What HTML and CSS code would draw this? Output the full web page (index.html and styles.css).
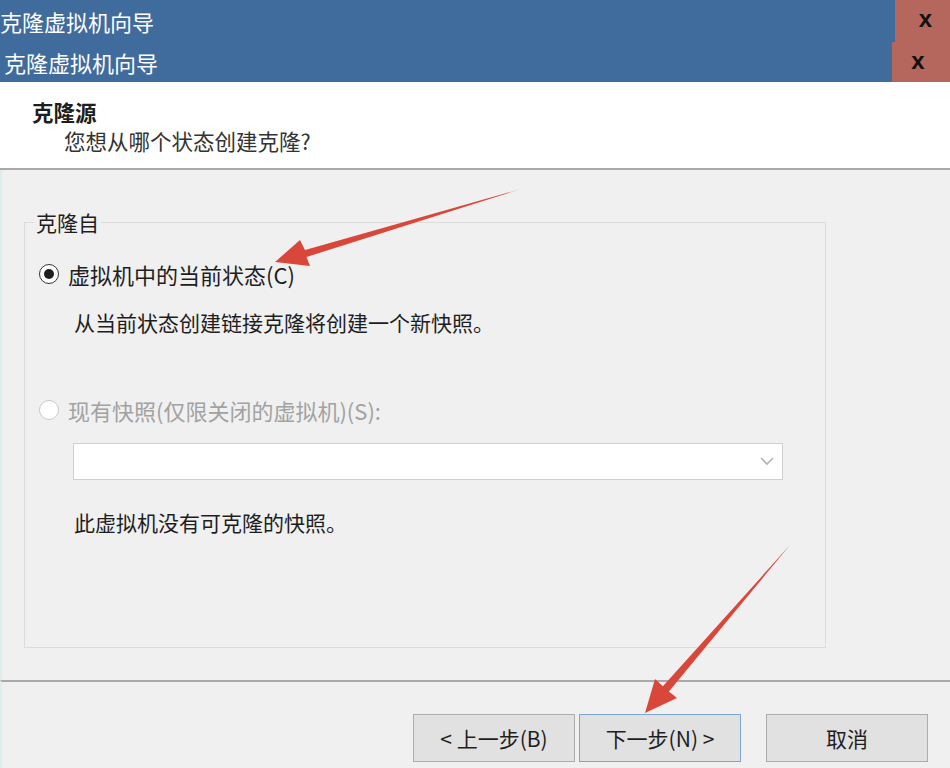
FILE: index.html
```html
<!DOCTYPE html>
<html lang="zh-CN">
<head>
    <meta charset="UTF-8">
    <title>克隆虚拟机向导</title>
    <link rel="stylesheet" href="styles.css">
</head>
<body>
    <div class="window">
        <div class="titlebar">
            <span class="title">克隆虚拟机向导</span>
            <span class="close">x</span>
        </div>
        <div class="titlebar second">
            <span class="title">克隆虚拟机向导</span>
            <span class="close">x</span>
        </div>

        <div class="header">
            <div class="header-title">克隆源</div>
            <div class="header-sub">您想从哪个状态创建克隆?</div>
        </div>

        <div class="content">
            <fieldset class="group">
                <legend>克隆自</legend>
                <div class="option">
                    <span class="radio checked"></span>
                    <span>虚拟机中的当前状态(C)</span>
                </div>
                <p class="desc">从当前状态创建链接克隆将创建一个新快照。</p>
                <div class="option disabled second-option">
                    <span class="radio"></span>
                    <span>现有快照(仅限关闭的虚拟机)(S):</span>
                </div>
                <div class="select">
                    <svg width="14" height="9" viewBox="0 0 14 9"><path d="M1 1 L7 7 L13 1" fill="none" stroke="#b4b4b4" stroke-width="1.6"/></svg>
                </div>
                <p class="desc note">此虚拟机没有可克隆的快照。</p>
            </fieldset>
        </div>

        <div class="footer">
            <button class="btn">&lt; 上一步(B)</button>
            <button class="btn focused">下一步(N) &gt;</button>
            <button class="btn cancel">取消</button>
        </div>

        <svg class="arrows" width="950" height="768" viewBox="0 0 950 768">
            <polygon points="521,189 305,250 300,240 275,262 310,266 306.5,257" fill="#d9473b"/>
            <polygon points="790,545 662.9,686.2 655,679 645,713 677,698 668.9,691.4" fill="#d9473b"/>
        </svg>
    </div>
</body>
</html>
```

FILE: styles.css
```css
body {
    margin: 0;
    font-family: "Noto Sans CJK SC", "Noto Sans", sans-serif;
    color: #1e1e1e;
    background: #f0f0f0;
}
.window {
    position: relative;
    width: 950px;
    height: 768px;
    overflow: hidden;
    background: #f0f0f0;
}
.titlebar {
    display: flex;
    justify-content: space-between;
    height: 42px;
    background: #3f6b9d;
    color: white;
}
.titlebar.second {
    height: 40px;
}
.title {
    font-size: 22px;
    line-height: 42px;
}
.second .title {
    line-height: 40px;
    padding-left: 4px;
}
.close {
    width: 55px;
    box-sizing: border-box;
    background: #b5675d;
    color: #111;
    font-family: "Liberation Sans", sans-serif;
    font-weight: bold;
    font-size: 24px;
    line-height: 38px;
    text-align: center;
    padding-left: 6px;
}
.second .close {
    width: 58px;
    padding: 0 6px 0 0;
}
.header {
    background: white;
    border-bottom: 2px solid #a9a9a9;
    box-sizing: border-box;
    height: 88px;
    padding-top: 16px;
}
.header-title {
    font-size: 21.5px;
    font-weight: bold;
    line-height: 28px;
    padding-left: 32px;
}
.header-sub {
    font-size: 21.5px;
    line-height: 30px;
    padding-left: 64px;
    color: #333;
}
.content {
    height: 510px;
    box-sizing: border-box;
    padding: 39px 124px 0 22px;
    border-left: 2px solid #dcefee;
}
.group {
    margin: 0;
    padding: 0 0 0 14px;
    height: 439px;
    box-sizing: border-box;
    border: 1px solid #dcdcdc;
}
.group legend {
    margin-left: -5px;
    padding: 0 2px;
    font-size: 21px;
    line-height: 26px;
}
.option {
    display: flex;
    align-items: center;
    gap: 9px;
    font-size: 22px;
    line-height: 30px;
    margin-top: 24px;
}
.second-option {
    margin-top: 58px;
}
.disabled {
    color: #a2a2a2;
}
.radio {
    width: 18px;
    height: 18px;
    border: 1px solid #333;
    border-radius: 50%;
    background: white;
    display: flex;
    align-items: center;
    justify-content: center;
}
.radio.checked::after {
    content: "";
    width: 10px;
    height: 10px;
    border-radius: 50%;
    background: #1e1e1e;
}
.disabled .radio {
    border-color: #c8c8c8;
}
.desc {
    margin: 18px 0 0 35px;
    font-size: 21px;
    line-height: 30px;
}
.select {
    margin: 18px 0 0 34px;
    width: 710px;
    height: 37px;
    box-sizing: border-box;
    background: white;
    border: 1px solid #cfcfcf;
    display: flex;
    align-items: center;
    justify-content: flex-end;
    padding-right: 8px;
}
.note {
    margin-top: 27px;
}
.footer {
    height: 90px;
    box-sizing: border-box;
    border-top: 2px solid #a9a9a9;
    border-left: 2px solid #dcefee;
    display: flex;
    justify-content: flex-end;
    align-items: flex-start;
    padding: 32px 22px 0 0;
}
.btn {
    width: 162px;
    height: 48px;
    margin-left: 4px;
    background: #e1e1e1;
    border: 1px solid #adadad;
    font-family: "Noto Sans CJK SC", "Noto Sans", sans-serif;
    font-size: 21px;
    color: #1e1e1e;
    cursor: pointer;
}
.btn.focused {
    border-color: #7aa7d6;
}
.btn.cancel {
    margin-left: 25px;
}
.arrows {
    position: absolute;
    left: 0;
    top: 0;
    pointer-events: none;
}
```
